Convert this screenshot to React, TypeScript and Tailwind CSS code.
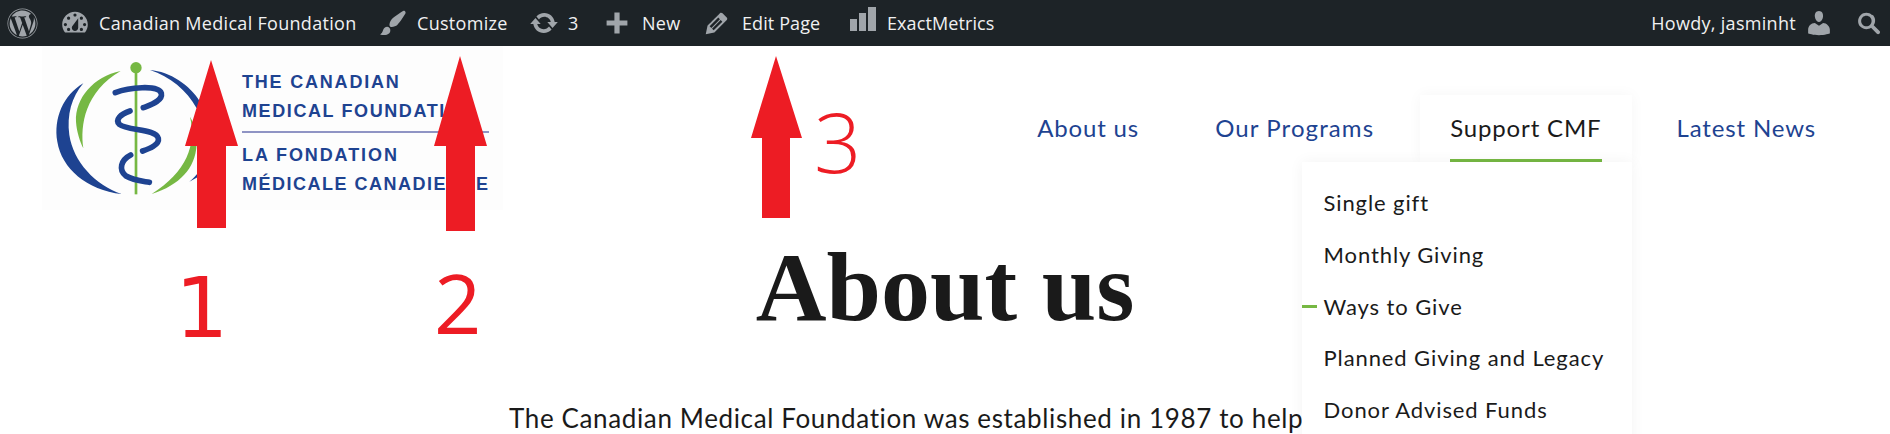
import { FaWordpress } from "react-icons/fa";

const sans = "font-['Open_Sans',sans-serif]";
const site = "font-['Lato',sans-serif]";

function Dash({ d, className }: { d: string; className: string }) {
  return (
    <svg viewBox="0 0 20 20" className={"shrink-0 fill-[#a0a5aa] " + className}>
      <path d={d} fillRule="evenodd" />
    </svg>
  );
}

const icons = {
  dashboard:
    "M3.76 16h12.48c1.1-1.37 1.76-3.11 1.76-5 0-4.42-3.58-8-8-8s-8 3.58-8 8c0 1.89.66 3.63 1.76 5zM10 4c.55 0 1 .45 1 1s-.45 1-1 1-1-.45-1-1 .45-1 1-1zM6 6c.55 0 1 .45 1 1s-.45 1-1 1-1-.45-1-1 .45-1 1-1zm8 0c.55 0 1 .45 1 1s-.45 1-1 1-1-.45-1-1 .45-1 1-1zm-5.37 5.55L12 7v6c0 1.1-.9 2-2 2s-2-.9-2-2c0-.57.24-1.08.63-1.45zM4 10c.55 0 1 .45 1 1s-.45 1-1 1-1-.45-1-1 .45-1 1-1zm12 0c.55 0 1 .45 1 1s-.45 1-1 1-1-.45-1-1 .45-1 1-1zm-10 3c.55 0 1 .45 1 1s-.45 1-1 1-1-.45-1-1 .45-1 1-1zm8 0c.55 0 1 .45 1 1s-.45 1-1 1-1-.45-1-1 .45-1 1-1z",
  brush:
    "M18.33 3.57s.27-.8-.31-1.36c-.53-.52-1.22-.24-1.22-.24-.61.3-5.76 3.47-7.67 5.57-.86.96-2.06 3.79-1.09 4.82.92.98 3.96-.17 4.79-1 2.06-2.06 5.21-7.17 5.5-7.79zM1.4 17.65c2.37-1.56 1.46-3.41 3.23-4.64.93-.65 2.22-.62 3.08.29.63.67.8 2.57-.16 3.46-1.57 1.45-4 1.55-6.15.89z",
  update:
    "M10.2 3.28c3.53 0 6.43 2.61 6.92 6h2.08l-3.5 4-3.5-4h2.32c-.45-1.97-2.21-3.45-4.32-3.45-1.45 0-2.73.71-3.54 1.78L4.95 5.66C6.23 4.2 8.11 3.28 10.2 3.28zm-.4 13.44c-3.52 0-6.43-2.61-6.92-6H.8l3.5-4c1.17 1.33 2.33 2.67 3.5 4H5.48c.45 1.97 2.21 3.45 4.32 3.45 1.45 0 2.73-.71 3.54-1.78l1.71 1.95c-1.28 1.46-3.15 2.38-5.25 2.38z",
  plus: "M18 8v4h-6v6H8v-6H2V8h6V2h4v6h6z",
  edit: "M13.89 3.39l2.71 2.72c.46.46.42 1.24.03 1.64l-8.01 8.02-5.56 1.16 1.16-5.58s7.6-7.63 7.99-8.03c.39-.39 1.22-.39 1.68.07zm-2.73 2.79l-5.59 5.61 1.11 1.11 5.54-5.65zm-2.97 8.23l5.58-5.6-1.07-1.08-5.59 5.6z",
  user: "M10 9.25c-2.27 0-2.73-3.44-2.73-3.44C7 4.02 7.82 2 9.97 2c2.16 0 2.98 2.02 2.71 3.81 0 0-.41 3.44-2.68 3.44zm0 2.57L12.72 10c2.39 0 4.52 2.33 4.52 4.53v2.49s-3.65 1.13-7.24 1.13c-3.65 0-7.24-1.13-7.24-1.13v-2.49c0-2.25 1.94-4.48 4.47-4.48z",
  search:
    "M12.14 4.78c-2.15-2.15-5.64-2.15-7.78 0s-2.15 5.64 0 7.78c1.9 1.9 4.85 2.12 7 .65l3.9 3.9c.44.44 1.15.44 1.59 0l.19-.19c.44-.44.44-1.15 0-1.59l-3.9-3.9c1.47-2.15 1.25-5.1-.65-7zm-1.41 6.36c-1.37 1.37-3.6 1.37-4.97 0s-1.37-3.6 0-4.97 3.6-1.37 4.97 0 1.37 3.6 0 4.97z",
};

function AdminBar() {
  return (
    <div className={"flex h-[46px] items-center bg-[#1d2327] text-[18px] text-[#f0f0f1] tracking-[0.3px] " + sans}>
      <FaWordpress className="ml-[7px] h-[31px] w-[31px] shrink-0 text-[#a0a5aa]" />
      <Dash d={icons.dashboard} className="ml-[21px] h-[32px] w-[32px]" />
      <span className="ml-[8px] w-[257px] whitespace-nowrap">Canadian Medical Foundation</span>
      <Dash d={icons.brush} className="ml-[22px] h-[30px] w-[30px]" />
      <span className="ml-[9px] w-[90px]">Customize</span>
      <Dash d={icons.update} className="ml-[22px] h-[30px] w-[30px]" />
      <span className="ml-[9px] w-[10px]">3</span>
      <Dash d={icons.plus} className="ml-[26px] h-[26px] w-[26px]" />
      <span className="ml-[12px] w-[38px]">New</span>
      <Dash d={icons.edit} className="ml-[21px] h-[31px] w-[31px]" />
      <span className="ml-[10px] w-[79px] whitespace-nowrap tracking-[0.1px]">Edit Page</span>
      <svg viewBox="0 0 26 24" className="ml-[29px] h-[24px] w-[26px] shrink-0 -translate-y-[4px] fill-[#a0a5aa]">
        <rect x="0" y="12" width="7" height="12" />
        <rect x="9" y="6" width="7" height="18" />
        <rect x="18" y="0" width="8" height="24" />
      </svg>
      <span className="ml-[11px] w-[107px] tracking-[0.1px]">ExactMetrics</span>
      <span className="ml-auto whitespace-nowrap">Howdy, jasminht</span>
      <Dash d={icons.user} className="ml-[8px] h-[30px] w-[30px]" />
      <Dash d={icons.search} className="ml-[20px] mr-[6px] h-[30px] w-[30px]" />
    </div>
  );
}

function Logo() {
  return (
    <div className="ml-[42px] flex h-[164px] w-[461px] shrink-0 bg-[#fdfdfd]">
      <svg viewBox="36 3 600 492" className="h-[164px] w-[200px] shrink-0">
        <g fill="#1e4391">
          <path d="M160 115C100 150 70 220 82 290C95 370 170 435 275 447C195 420 130 350 118 270C110 210 125 155 160 115Z" />
          <path d="M360 75C420 80 480 120 510 170L500 190C470 135 420 95 360 75Z" />
          <path d="M478 410C490 400 500 390 510 375L505 395Z" />
        </g>
        <g fill="#76b843">
          <path d="M272 78C190 95 135 160 138 230C140 260 150 290 160 310C150 240 165 140 272 78Z" />
          <path d="M480 215C500 300 470 380 365 447C450 420 495 370 500 300C503 270 495 240 480 215Z" />
          <rect x="314" y="80" width="8" height="368" />
          <circle cx="318" cy="68" r="17" />
        </g>
        <g fill="none" stroke="#1e4391" strokeWidth="17" strokeLinecap="round">
          <path d="M256 143C295 128 385 118 394 145C399 168 360 180 340 188" />
          <path d="M300 198C270 208 255 225 268 238C292 258 378 250 385 280C389 300 355 312 338 318" />
          <path d="M302 330C272 345 265 375 288 393C310 406 335 408 358 412" />
        </g>
      </svg>
      <div className="flex w-[247px] flex-col pt-[22px] font-['Liberation_Sans',sans-serif] text-[18px] leading-[29px] font-bold whitespace-nowrap text-[#1e4391]">
        <span className="tracking-[1.8px]">THE CANADIAN</span>
        <span className="tracking-[1.6px]">MEDICAL FOUNDATION</span>
        <div className="mt-[5px] mb-[8px] h-[2px] bg-[#8f94c4]" />
        <span className="tracking-[1.9px]">LA FONDATION</span>
        <span className="tracking-[1.5px]">MÉDICALE CANADIENNE</span>
      </div>
    </div>
  );
}

const subItems = ["Single gift", "Monthly Giving", "Ways to Give", "Planned Giving and Legacy", "Donor Advised Funds"];

function Nav() {
  return (
    <nav className={"mt-[49px] mr-[44px] ml-auto flex gap-[15px] text-[24px] tracking-[0.85px] whitespace-nowrap text-[#1e4391] " + site}>
      <a className="flex h-[67px] w-[163px] items-center px-[30px] pb-[2px]">About us</a>
      <a className="flex h-[67px] w-[220px] items-center px-[30px] pb-[2px] tracking-[1.1px]">Our Programs</a>
      <div className="relative flex h-[67px] items-center bg-white px-[30px] pb-[2px] text-[#1a1a1a] shadow-[0_0_14px_rgba(0,0,0,0.04)]">
        Support CMF
        <div className="absolute right-[30px] bottom-0 left-[30px] h-[3px] bg-[#76b843]" />
        <div className="absolute top-full right-0 z-10 w-[330px] bg-white pt-[15px] pb-[20px] text-[22px] tracking-[0.9px] shadow-[0_0_14px_rgba(0,0,0,0.05)]">
          {subItems.map((s) => (
            <div key={s} className="relative flex h-[51.7px] items-center pl-[22px]">
              {s === "Ways to Give" && <div className="absolute left-0 h-[3px] w-[15px] bg-[#76b843]" />}
              {s}
            </div>
          ))}
        </div>
      </div>
      <a className="flex h-[67px] items-center px-[30px] pb-[2px]">Latest News</a>
    </nav>
  );
}

function Annotations() {
  return (
    <>
      <svg viewBox="0 0 1890 434" className="pointer-events-none absolute inset-0 z-20 h-[434px] w-[1890px] fill-[#ed1c24]">
        <polygon points="211,60 238,146 226,146 226,228 197,228 197,146 185,146" />
        <polygon points="460,56 487,146 475,146 475,231 446,231 446,146 434,146" />
        <polygon points="776,56 802,138 790,138 790,218 762,218 762,138 751,138" />
      </svg>
      <span className="absolute top-[253px] left-[175px] z-20 font-['DejaVu_Sans',sans-serif] text-[84px] leading-[110px] text-[#ed1c24]">1</span>
      <span className={"absolute top-[247px] left-[434px] z-20 text-[83px] leading-[110px] text-[#ed1c24] " + sans}>2</span>
      <span className={"absolute top-[86px] left-[814px] z-20 text-[83px] leading-[110px] font-light text-[#ed1c24] " + sans}>3</span>
    </>
  );
}

export default function App() {
  return (
    <div className="relative h-[434px] w-[1890px] overflow-hidden bg-white">
      <AdminBar />
      <header className="flex h-[164px]">
        <Logo />
        <Nav />
      </header>
      <main className="text-center text-[#1a1a1a]">
        <h1 className="mt-[22px] font-['Liberation_Serif',serif] text-[98px] leading-[110px] font-bold">About us</h1>
        <p className={"mx-auto mt-[58px] w-[872px] text-left text-[26px] leading-[36px] tracking-[0.63px] whitespace-nowrap " + site}>
          The Canadian Medical Foundation was established in 1987 to help
        </p>
      </main>
      <Annotations />
    </div>
  );
}
